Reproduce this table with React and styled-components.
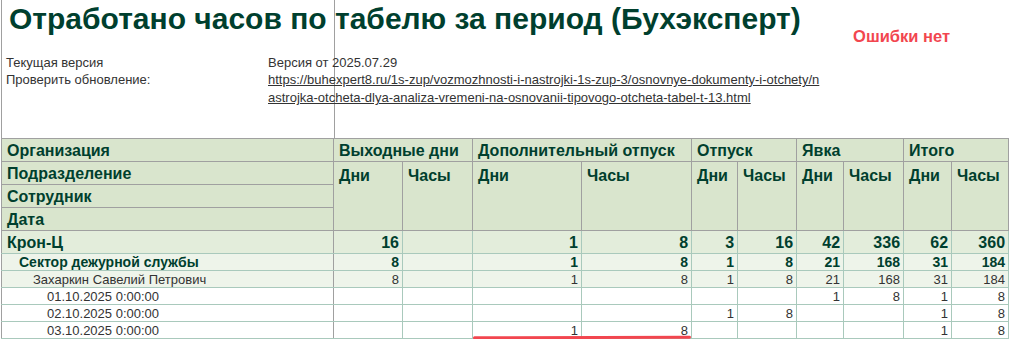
import React from "react";
import styled, { createGlobalStyle } from "styled-components";

const GlobalStyle = createGlobalStyle`
  html, body { margin: 0; padding: 0; background: #ffffff; }
  body { font-family: "Liberation Sans", Arial, sans-serif; }
`;

const GRID = "#a0a0a0";
const GREEN_LINE = "#a9c9bc";
const INK = "#003f2e";
const TEXT = "#333333";

const Sheet = styled.div`
  margin-left: 1px;
  width: 1008px;
  border-left: 1px solid ${GRID};
`;

const Top = styled.div`
  height: 138px;
  background: linear-gradient(${GRID}, ${GRID}) 332px 0 / 1px 100% no-repeat;
  display: flex;
  flex-direction: column;
`;

const TitleRow = styled.div`
  display: flex;
  align-items: flex-start;
  height: 54px;
`;

const Title = styled.h1`
  margin: 0;
  padding: 1px 0 0 7px;
  font-size: 30px;
  line-height: 36px;
  font-weight: 700;
  color: ${INK};
  white-space: nowrap;
`;

const Status = styled.div`
  margin: 27px 0 0 auto;
  padding-right: 60px;
  font-size: 16.5px;
  font-weight: 700;
  color: #f2464f;
  white-space: nowrap;
`;

const Info = styled.div`
  display: grid;
  grid-template-columns: 266px 560px;
  font-size: 13px;
  line-height: 17px;
  color: ${TEXT};
`;

const Label = styled.div`
  padding-left: 4px;
`;

const Value = styled.div``;

const Link = styled.a`
  color: ${TEXT};
  text-decoration: underline;
  word-break: break-all;
  display: block;
  width: 554px;
  line-height: 18px;
`;

const TableWrap = styled.div`
  position: relative;
`;

const Table = styled.table`
  border-collapse: collapse;
  table-layout: fixed;
  width: 1008px;
  margin-left: -1px;
  color: ${INK};
`;

const HeadCell = styled.th`
  background: #d9e5cd;
  border: 1px solid ${GRID};
  padding: ${(p) => (p.$top ? "5px 5px 0" : "2px 5px 0")};
  text-align: left;
  vertical-align: ${(p) => (p.$top ? "top" : "middle")};
  font-size: 16px;
  line-height: 18px;
  font-weight: 700;
  white-space: nowrap;
  overflow: hidden;
  height: 20px;
`;

const rowBg = { org: "#e3eddb", dept: "#eef4ea", emp: "#eef4ea", date: "#ffffff" };
const fontSize = { org: "16px", dept: "14px", emp: "13px", date: "13px" };
const indent = { org: 5, dept: 17, emp: 31, date: 45 };
const isBold = (l) => l === "org" || l === "dept";

const Row = styled.tr`
  height: ${(p) => (p.$level === "org" ? "23px" : "17px")};
  background: ${(p) => rowBg[p.$level]};
`;

const NameCell = styled.td`
  border: 1px solid ${GREEN_LINE};
  border-right: 1px solid ${GRID};
  border-left: 1px solid ${GRID};
  padding: 0 0 0 ${(p) => indent[p.$level]}px;
  font-size: ${(p) => fontSize[p.$level]};
  font-weight: ${(p) => (isBold(p.$level) ? 700 : 400)};
  color: ${(p) => (isBold(p.$level) ? INK : TEXT)};
  white-space: nowrap;
  line-height: 15px;
`;

const NumCell = styled.td`
  border: 1px solid ${GREEN_LINE};
  padding: 0 3px 0 0;
  text-align: right;
  font-size: ${(p) => fontSize[p.$level]};
  font-weight: ${(p) => (isBold(p.$level) ? 700 : 400)};
  color: ${(p) => (isBold(p.$level) ? INK : TEXT)};
  line-height: 15px;
  white-space: nowrap;
`;

const Marker = styled.span`
  position: absolute;
  left: 471px;
  top: 198px;
  width: 218px;
  height: 3px;
  border-radius: 2px;
  background: #f2464f;
  transform: rotate(-0.15deg);
`;

const widths = [332, 69, 70, 109, 110, 46, 59, 47, 60, 48, 57];

const groups = ["Выходные дни", "Дополнительный отпуск", "Отпуск", "Явка", "Итого"];

const rows = [
  { level: "org", name: "Крон-Ц", v: ["16", "", "1", "8", "3", "16", "42", "336", "62", "360"] },
  { level: "dept", name: "Сектор дежурной службы", v: ["8", "", "1", "8", "1", "8", "21", "168", "31", "184"] },
  { level: "emp", name: "Захаркин Савелий Петрович", v: ["8", "", "1", "8", "1", "8", "21", "168", "31", "184"] },
  { level: "date", name: "01.10.2025 0:00:00", v: ["", "", "", "", "", "", "1", "8", "1", "8"] },
  { level: "date", name: "02.10.2025 0:00:00", v: ["", "", "", "", "1", "8", "", "", "1", "8"] },
  { level: "date", name: "03.10.2025 0:00:00", v: ["", "", "1", "8", "", "", "", "", "1", "8"] },
];

export default function App() {
  return (
    <>
      <GlobalStyle />
      <Sheet>
        <Top>
          <TitleRow>
            <Title>Отработано часов по табелю за период (Бухэксперт)</Title>
            <Status>Ошибки нет</Status>
          </TitleRow>
          <Info>
            <Label>Текущая версия</Label>
            <Value>Версия от 2025.07.29</Value>
            <Label>Проверить обновление:</Label>
            <Value>
              <Link href="#">
                https://buhexpert8.ru/1s-zup/vozmozhnosti-i-nastrojki-1s-zup-3/osnovnye-dokumenty-i-otchety/nastrojka-otcheta-dlya-analiza-vremeni-na-osnovanii-tipovogo-otcheta-tabel-t-13.html
              </Link>
            </Value>
          </Info>
        </Top>
        <TableWrap>
          <Table>
            <colgroup>
              {widths.map((w, i) => (
                <col key={i} style={{ width: w }} />
              ))}
            </colgroup>
            <thead>
              <tr>
                <HeadCell>Организация</HeadCell>
                {groups.map((g) => (
                  <HeadCell key={g} colSpan={2}>
                    {g}
                  </HeadCell>
                ))}
              </tr>
              <tr>
                <HeadCell>Подразделение</HeadCell>
                {groups.map((g) => (
                  <React.Fragment key={g}>
                    <HeadCell rowSpan={3} $top>
                      Дни
                    </HeadCell>
                    <HeadCell rowSpan={3} $top>
                      Часы
                    </HeadCell>
                  </React.Fragment>
                ))}
              </tr>
              <tr>
                <HeadCell>Сотрудник</HeadCell>
              </tr>
              <tr>
                <HeadCell>Дата</HeadCell>
              </tr>
            </thead>
            <tbody>
              {rows.map((r, i) => (
                <Row key={i} $level={r.level}>
                  <NameCell $level={r.level}>{r.name}</NameCell>
                  {r.v.map((x, j) => (
                    <NumCell key={j} $level={r.level}>
                      {x}
                    </NumCell>
                  ))}
                </Row>
              ))}
            </tbody>
          </Table>
          <Marker />
        </TableWrap>
      </Sheet>
    </>
  );
}
